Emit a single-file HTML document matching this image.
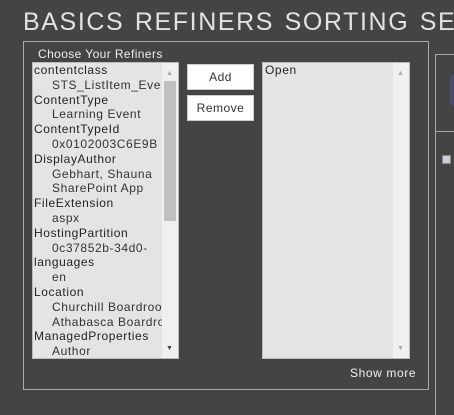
<!DOCTYPE html>
<html><head><style>
body{margin:0;width:454px;height:410px;background:#444;overflow:hidden;font-family:"Liberation Sans",sans-serif;position:relative}
.a{position:absolute}
.t{left:23px;top:8px;font-size:25px;color:#e2e2e2;letter-spacing:1.6px;white-space:nowrap;word-spacing:2px}
.fs{left:23px;top:41px;width:404px;height:347px;border:1px solid #aaa}
.lg{left:36px;top:47px;font-size:12px;color:#eee;background:#444;padding:0 2px;letter-spacing:.4px}
.lb{background:#e4e4e4;border:1px solid #bbb;overflow:hidden}
.it{font-size:12px;color:#222;line-height:14.8px;letter-spacing:.6px;white-space:nowrap}
.it div.s{padding-left:18px;color:#333}
.btn{background:#fff;border:1px solid #ccc;font-size:12px;color:#333;text-align:center;letter-spacing:.5px}
</style></head><body>
<div class="a t">BASICS REFINERS SORTING SE</div>
<div class="a fs"></div>
<div class="a lg">Choose Your Refiners</div>
<div class="a lb" style="left:32px;top:62px;width:145px;height:295px">
<div class="a it" style="left:1px;top:0">
<div>contentclass</div><div class="s">STS_ListItem_Eve</div><div>ContentType</div><div class="s">Learning Event</div><div>ContentTypeId</div><div class="s">0x0102003C6E9B</div><div>DisplayAuthor</div><div class="s">Gebhart, Shauna</div><div class="s">SharePoint App</div><div>FileExtension</div><div class="s">aspx</div><div>HostingPartition</div><div class="s">0c37852b-34d0-</div><div>languages</div><div class="s">en</div><div>Location</div><div class="s">Churchill Boardroom</div><div class="s">Athabasca Boardroom</div><div>ManagedProperties</div><div class="s">Author</div>
</div>
<div class="a" style="left:129px;top:0;width:16px;height:295px;background:#f0f0f0"></div>
<div class="a" style="left:131px;top:18px;width:12px;height:140px;background:#c0c0c0"></div>
<div class="a" style="left:133px;top:7px;font-size:7px;color:#aaa">▲</div>
<div class="a" style="left:133px;top:282px;font-size:7px;color:#444">▼</div>
</div>
<div class="a btn" style="left:187px;top:64px;width:65px;height:24px;line-height:24px">Add</div>
<div class="a btn" style="left:187px;top:95px;width:65px;height:24px;line-height:24px">Remove</div>
<div class="a lb" style="left:262px;top:62px;width:146px;height:295px">
<div class="a it" style="left:2px;top:0">Open</div>
<div class="a" style="left:130px;top:0;width:16px;height:295px;background:#f0f0f0"></div>
<div class="a" style="left:134px;top:7px;font-size:7px;color:#aaa">▲</div>
<div class="a" style="left:134px;top:282px;font-size:7px;color:#aaa">▼</div>
</div>
<div class="a" style="left:350px;top:366px;font-size:12px;color:#eee;letter-spacing:.6px">Show more</div>
<div class="a" style="left:435px;top:54px;width:25px;height:360px;border-left:1px solid #aaa;border-top:1px solid #aaa"></div>
<div class="a" style="left:435px;top:131px;width:20px;height:1px;background:#aaa"></div>
<div class="a" style="left:450px;top:75px;width:4px;height:30px;background:#4a4a6a"></div>
<div class="a" style="left:442px;top:155px;width:7px;height:7px;background:#ccd;border:1px solid #888"></div>
</body></html>
